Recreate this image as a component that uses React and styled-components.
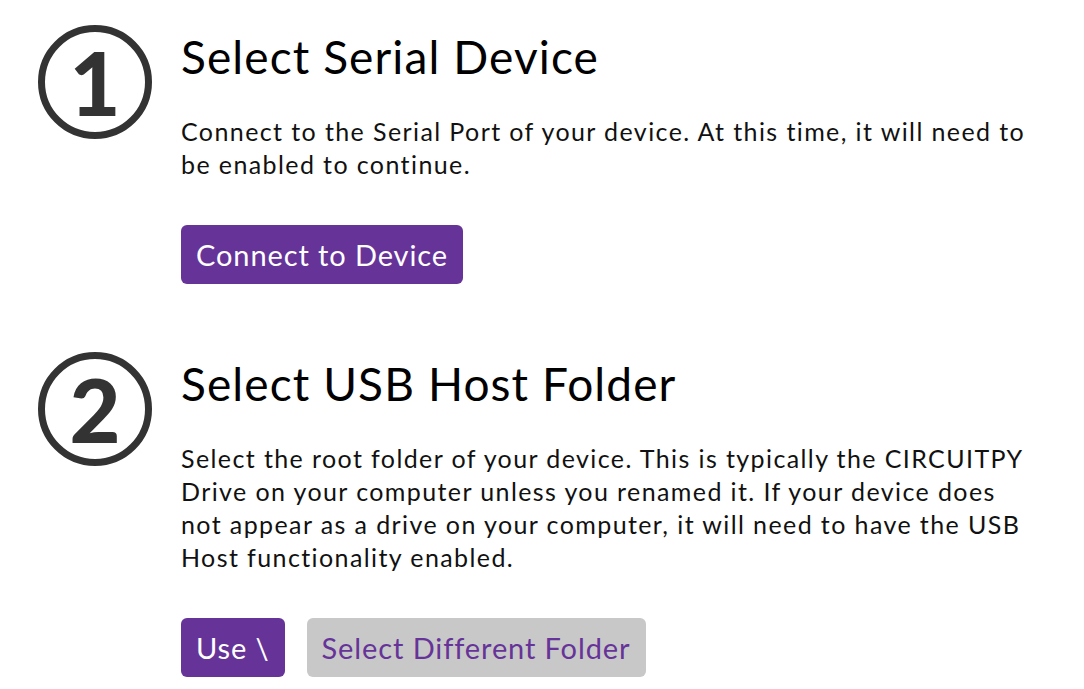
import styled, { createGlobalStyle } from 'styled-components'

const Global = createGlobalStyle`
body {
  margin: 0;
  background: #fff;
  font-family: "Lato", "Liberation Sans", sans-serif;
  color: #111;
}
`

const Page = styled.div`
padding: 25px 0 0 38px;
display: flex;
flex-direction: column;
gap: 68px;
`

const Step = styled.section`
display: flex;
align-items: flex-start;
gap: 29px;
`

const Number = styled.div`
flex: none;
width: 114px;
height: 114px;
box-sizing: border-box;
border: 7px solid #333;
border-radius: 50%;
display: flex;
align-items: center;
justify-content: center;
color: #333;
font-family: "Lato", sans-serif;
font-weight: 900;
font-size: 88px;
line-height: 1;
`

const Body = styled.div`
width: 856px;
`

const Title = styled.h2`
margin: 4px 0 0;
font-size: 46px;
font-weight: 400;
letter-spacing: 1.1px;
line-height: 56px;
color: #000;
`

const Text = styled.p`
margin: 30px 0 44px;
font-size: 25px;
letter-spacing: 1.4px;
line-height: 33px;
color: #111;
`

const Buttons = styled.div`
display: flex;
gap: 22px;
`

const Button = styled.button`
height: 59px;
padding: 0 15px;
border: none;
border-radius: 6px;
font-family: inherit;
font-size: 29px;
letter-spacing: 0.9px;
background: ${p => (p.grey ? '#c8c8c8' : '#663399')};
color: ${p => (p.grey ? '#663399' : '#fff')};
cursor: pointer;
`

const App = () => {
  return (
    <Page>
      <Global />
      <Step>
        <Number>1</Number>
        <Body>
          <Title>Select Serial Device</Title>
          <Text>
            Connect to the Serial Port of your device. At this time, it will need to be enabled to continue.
          </Text>
          <Buttons>
            <Button>Connect to Device</Button>
          </Buttons>
        </Body>
      </Step>
      <Step>
        <Number>2</Number>
        <Body>
          <Title>Select USB Host Folder</Title>
          <Text>
            Select the root folder of your device. This is typically the CIRCUITPY Drive on your computer unless you renamed it. If your device does not appear as a drive on your computer, it will need to have the USB Host functionality enabled.
          </Text>
          <Buttons>
            <Button>Use \</Button>
            <Button grey>Select Different Folder</Button>
          </Buttons>
        </Body>
      </Step>
    </Page>
  )
}

export default App
